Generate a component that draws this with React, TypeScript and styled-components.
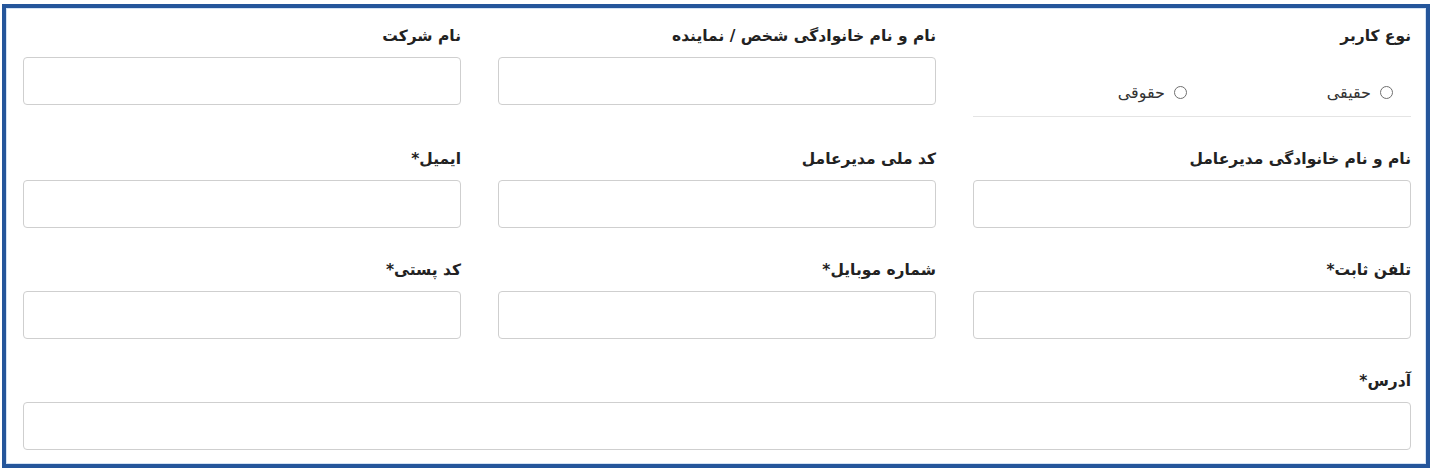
import React from 'react';
import styled, { createGlobalStyle } from 'styled-components';

const GlobalStyle = createGlobalStyle`
  html, body {
    margin: 0;
    padding: 0;
    background: #ffffff;
  }
  body {
    font-family: "DejaVu Sans", "Noto Sans", sans-serif;
    color: #212121;
  }
  * {
    box-sizing: border-box;
  }
`;

const Page = styled.div`
  width: 1435px;
  height: 472px;
  padding: 4px 5px 4px 2px;
`;

const Frame = styled.form`
  direction: rtl;
  height: 464px;
  border: 4px solid #25569b;
  box-shadow: inset 0 0 0 1px #d3e2f4;
  padding: 16px 15px 15px 17px;
  display: grid;
  grid-template-columns: repeat(3, 1fr);
  column-gap: 37px;
  row-gap: 30px;
  align-items: start;
  align-content: start;
`;

const Field = styled.div<{ $wide?: boolean }>`
  display: flex;
  flex-direction: column;
  grid-column: ${({ $wide }) => ($wide ? '1 / -1' : 'auto')};
`;

const Label = styled.label`
  display: block;
  font-size: 15.5px;
  font-weight: bold;
  line-height: 24px;
  height: 24px;
  margin-bottom: 9px;
  color: #222;
  white-space: nowrap;
`;

const TextInput = styled.input`
  display: block;
  width: 100%;
  height: 48px;
  border: 1px solid #cfcfcf;
  border-radius: 4px;
  background: #fff;
  padding: 0 12px;
  font-family: inherit;
  font-size: 15px;
  outline: none;
`;

const RadioGroup = styled.div`
  display: flex;
  align-items: center;
  height: 60px;
  padding: 12px 18px 0 0;
  border-bottom: 1px solid #e4e4e4;
`;

const RadioOption = styled.label`
  display: flex;
  align-items: center;
  gap: 9px;
  width: 206px;
  font-size: 16px;
  color: #333;
  cursor: pointer;
`;

const RadioDot = styled.input.attrs({ type: 'radio' })`
  appearance: none;
  width: 13px;
  height: 13px;
  margin: 0;
  border: 1px solid #6f6f6f;
  border-radius: 50%;
  background: #fff;
  flex-shrink: 0;
`;

type FieldDef = { label: string; wide?: boolean };

const rows: FieldDef[] = [
  { label: 'نام و نام خانوادگی مدیرعامل' },
  { label: 'کد ملی مدیرعامل' },
  { label: 'ایمیل*' },
  { label: 'تلفن ثابت*' },
  { label: 'شماره موبایل*' },
  { label: 'کد پستی*' },
  { label: 'آدرس*', wide: true },
];

export default function App() {
  return (
    <>
      <GlobalStyle />
      <Page>
        <Frame>
          <Field>
            <Label>نوع کاربر</Label>
            <RadioGroup>
              <RadioOption>
                <RadioDot name="userType" />
                حقیقی
              </RadioOption>
              <RadioOption>
                <RadioDot name="userType" />
                حقوقی
              </RadioOption>
            </RadioGroup>
          </Field>
          <Field>
            <Label>نام و نام خانوادگی شخص / نماینده</Label>
            <TextInput />
          </Field>
          <Field>
            <Label>نام شرکت</Label>
            <TextInput />
          </Field>
          {rows.map((f) => (
            <Field key={f.label} $wide={f.wide}>
              <Label>{f.label}</Label>
              <TextInput />
            </Field>
          ))}
        </Frame>
      </Page>
    </>
  );
}
